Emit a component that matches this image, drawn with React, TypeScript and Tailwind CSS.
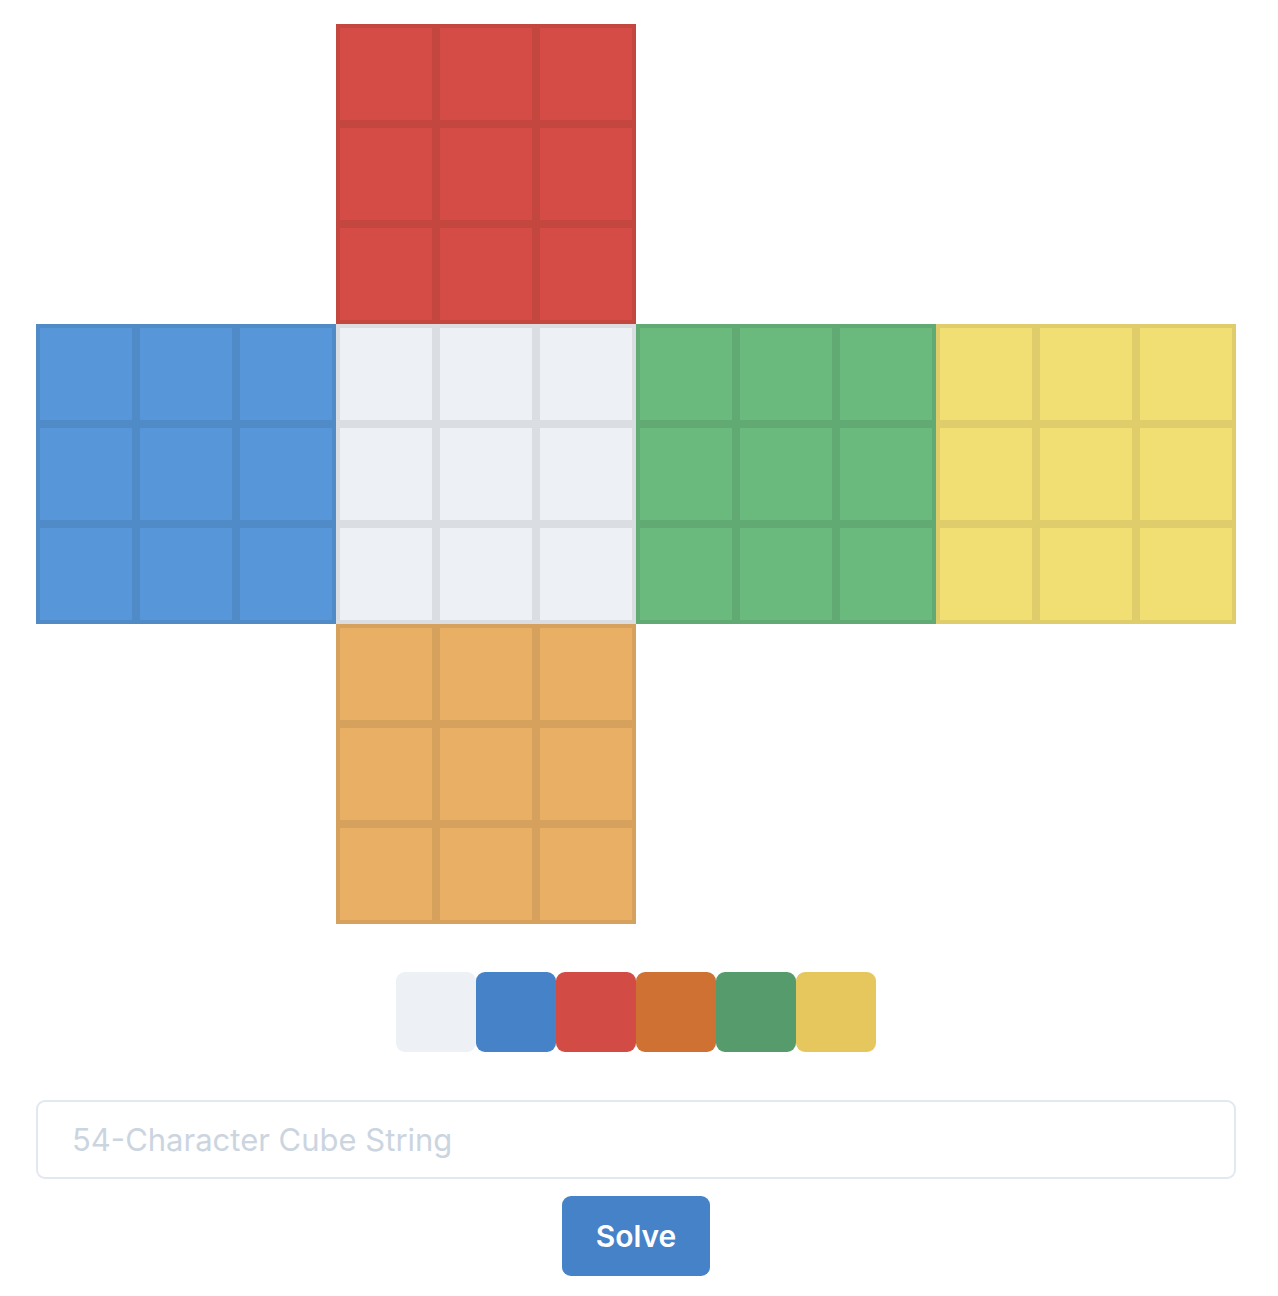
import React, { useState } from 'react';

// Face colour definitions (sticker fill)
const faces = [
  { id: 'U', color: 'bg-[#d44c45]', col: 'col-start-2', row: 'row-start-1' },
  { id: 'L', color: 'bg-[#5797d9]', col: 'col-start-1', row: 'row-start-2' },
  { id: 'F', color: 'bg-[#edf0f5]', col: 'col-start-2', row: 'row-start-2' },
  { id: 'R', color: 'bg-[#6ab97d]', col: 'col-start-3', row: 'row-start-2' },
  { id: 'B', color: 'bg-[#f1df74]', col: 'col-start-4', row: 'row-start-2' },
  { id: 'D', color: 'bg-[#e9af64]', col: 'col-start-2', row: 'row-start-3' },
];

const swatches = [
  'bg-[#edf0f5]',
  'bg-[#4682c8]',
  'bg-[#d24c45]',
  'bg-[#cf7133]',
  'bg-[#559b6c]',
  'bg-[#e5c75e]',
];

export default function App() {
  const [cubeString, setCubeString] = useState('');

  return (
    <div className="min-h-screen bg-white px-[36px] pt-[24px] font-['Inter',sans-serif]">
      <div className="w-[1200px]">
        {/* Cube net */}
        <div className="grid grid-cols-[repeat(4,300px)] grid-rows-[repeat(3,300px)]">
          {faces.map((face) => (
            <div key={face.id} className={`${face.col} ${face.row} grid grid-cols-3 grid-rows-3`}>
              {Array.from({ length: 9 }).map((_, i) => (
                <div
                  key={i}
                  className={`${face.color} h-[100px] w-[100px] border-4 border-black/[0.08]`}
                />
              ))}
            </div>
          ))}
        </div>

        {/* Colour picker */}
        <div className="mt-[48px] flex justify-center">
          {swatches.map((s, i) => (
            <button key={i} className={`${s} h-[80px] w-[80px] rounded-[9px]`} />
          ))}
        </div>

        {/* Cube string input */}
        <input
          type="text"
          value={cubeString}
          onChange={(e) => setCubeString(e.target.value)}
          placeholder="54-Character Cube String"
          className="mt-[48px] block h-[79px] w-full rounded-[9px] border-2 border-[#e2e8f0] px-[34px] text-[31px] text-gray-700 outline-none placeholder:text-[#cbd5e0]"
        />

        <div className="mt-[17px] flex justify-center">
          <button className="h-[80px] w-[148px] rounded-[9px] bg-[#4682c8] text-[30px] font-semibold text-white">
            Solve
          </button>
        </div>
      </div>
    </div>
  );
}
